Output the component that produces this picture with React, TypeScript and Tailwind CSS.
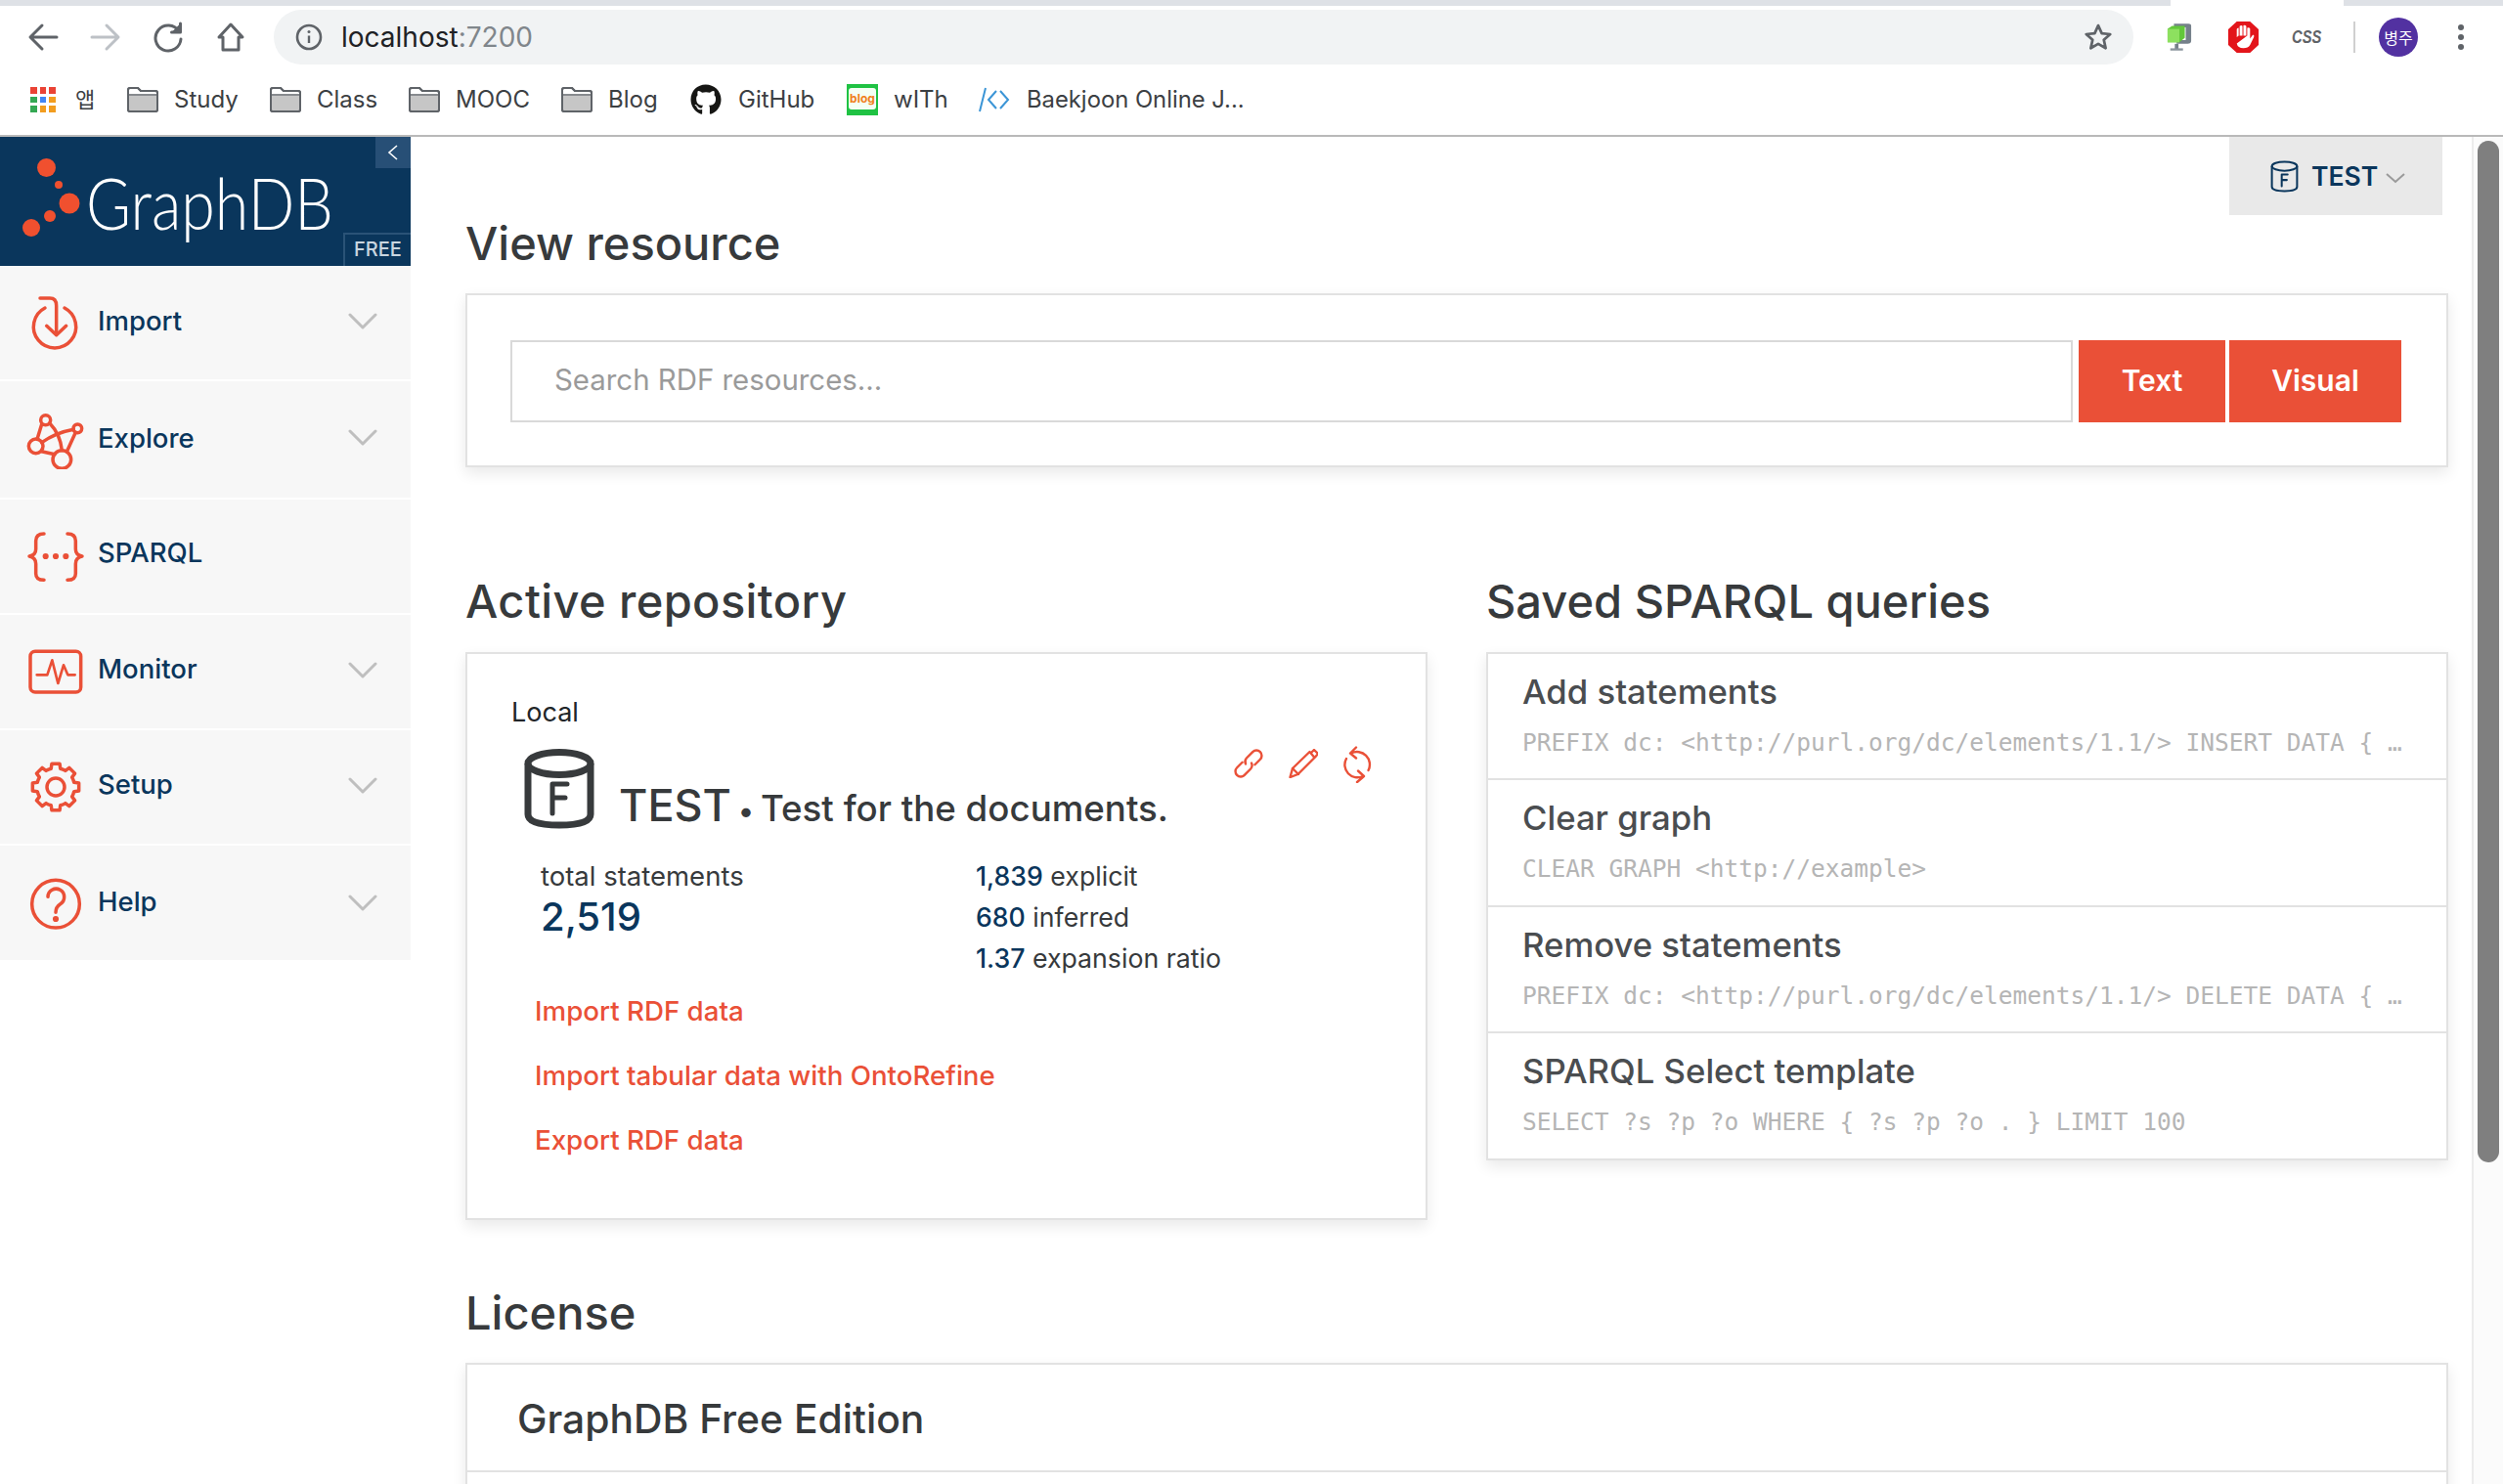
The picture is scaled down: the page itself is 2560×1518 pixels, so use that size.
import React from "react";
import { FaGithub } from "react-icons/fa";

const gearPath = (() => {
  const pts: string[] = [];
  const teeth = 8;
  const R = 72, r = 55;
  for (let i = 0; i < teeth; i++) {
    const a = (i * 2 * Math.PI) / teeth - Math.PI / 2;
    const w = 0.17, s = 0.25;
    const p = (rad: number, ang: number) => `${(90 + rad * Math.cos(ang)).toFixed(1)} ${(90 + rad * Math.sin(ang)).toFixed(1)}`;
    pts.push(`${i === 0 ? "M" : "L"}${p(r + 3, a - s)}`);
    pts.push(`L${p(R, a - w)}`);
    pts.push(`L${p(R, a + w)}`);
    pts.push(`L${p(r + 3, a + s)}`);
    pts.push(`A${r} ${r} 0 0 1 ${p(r + 3, a + (2 * Math.PI) / teeth - s)}`);
  }
  return pts.join(" ") + "Z";
})();

const Chevron = ({ cls }: { cls: string }) => (
  <svg width="30" height="18" viewBox="0 0 30 18" className={`ml-auto mr-[34px] shrink-0 ${cls}`}>
    <path d="M2 2 L15 15 L28 2" fill="none" stroke="#bfbfbf" strokeWidth="3" strokeLinecap="round" strokeLinejoin="round" />
  </svg>
);

const SideIcon = ({ children }: { children: React.ReactNode }) => (
  <svg width="60" height="60" viewBox="0 0 180 180" fill="none" stroke="#ea5037" strokeWidth="10.5" strokeLinecap="round" strokeLinejoin="round" className="shrink-0">
    {children}
  </svg>
);

const sideItems: { label: string; chevron: boolean; h: string; textCls: string; chevCls: string; icon: React.ReactNode }[] = [
  {
    label: "Import", chevron: true, h: "h-[116px]", textCls: "-mt-[2px]", chevCls: "-mt-[3px]",
    icon: (
      <>
        <path d="M57 45 A65 65 0 1 0 117 45" />
        <path d="M42 15 H72 Q92 15 92 38 V125" />
        <path d="M62 100 L92 128 L122 100" />
      </>
    ),
  },
  {
    label: "Explore", chevron: true, h: "h-[119px]", textCls: "-mt-[2px]", chevCls: "-mt-[3px]",
    icon: (
      <>
        <circle cx="59" cy="29" r="15" />
        <circle cx="157" cy="55" r="13" />
        <circle cx="29" cy="109" r="22" />
        <circle cx="109" cy="150" r="28" />
        <path d="M47 42 L33 88" />
        <path d="M46 125 L87 134" />
        <path d="M71 38 Q104 72 109 122" />
        <path d="M47 98 Q90 68 145 58" />
        <path d="M151 67 L124 126" />
      </>
    ),
  },
  {
    label: "SPARQL", chevron: false, h: "h-[116px]", textCls: "-mt-[6px]", chevCls: "",
    icon: (
      <>
        <path d="M54 21 Q29 21 29 43 V68 Q29 86 9 90 Q29 94 29 113 V143 Q29 163 54 163" />
        <path d="M126 21 Q151 21 151 43 V68 Q151 86 171 90 Q151 94 151 113 V143 Q151 163 126 163" />
        <circle cx="59" cy="90" r="4" fill="#ea5037" />
        <circle cx="90" cy="90" r="4" fill="#ea5037" />
        <circle cx="121" cy="90" r="4" fill="#ea5037" />
      </>
    ),
  },
  {
    label: "Monitor", chevron: true, h: "h-[116px]", textCls: "-mt-[5px]", chevCls: "-mt-[3px]",
    icon: (
      <>
        <rect x="12" y="28" width="155" height="125" rx="15" />
        <path d="M32 100 H64 L79 55 L97 126 L114 70 L127 100 H149" strokeWidth="8" />
      </>
    ),
  },
  {
    label: "Setup", chevron: true, h: "h-[116px]", textCls: "-mt-[5px]", chevCls: "-mt-[3px]",
    icon: (
      <>
        <path d={gearPath} />
        <circle cx="90" cy="90" r="27" />
      </>
    ),
  },
  {
    label: "Help", chevron: true, h: "h-[117px]", textCls: "-mt-[1px]", chevCls: "",
    icon: (
      <>
        <circle cx="90" cy="92" r="73" />
        <path d="M66 70 A25 25 0 1 1 104 92 Q90 101 90 118" />
        <circle cx="90" cy="138" r="4" fill="#ea5037" />
      </>
    ),
  },
];

const Folder = () => (
  <svg width="32" height="26" viewBox="0 0 32 26" className="shrink-0">
    <path d="M1 3 Q1 1 3 1 H11 L14 4 H29 Q31 4 31 6 V23 Q31 25 29 25 H3 Q1 25 1 23 Z" fill="#fff" stroke="#5f6368" strokeWidth="2" />
    <path d="M2 9 H30 V24 H2 Z" fill="#c6c6c6" />
    <path d="M1 8 H31" stroke="#5f6368" strokeWidth="1.5" />
    <path d="M1 3 Q1 1 3 1 H11 L14 4 H29 Q31 4 31 6 V23 Q31 25 29 25 H3 Q1 25 1 23 Z" fill="none" stroke="#5f6368" strokeWidth="2" />
  </svg>
);

const AppsGrid = () => {
  const c = ["#ea4335", "#ea4335", "#ea4335", "#34a853", "#4285f4", "#f29d1f", "#34a853", "#f29d1f", "#f29d1f"];
  return (
    <div className="grid grid-cols-3 gap-[3px] w-[26px] h-[26px] shrink-0">
      {c.map((col, i) => (
        <span key={i} className="block w-[6.6px] h-[6.6px]" style={{ backgroundColor: col }} />
      ))}
    </div>
  );
};

const Db = ({ w, h, color, sw, fsw }: { w: number; h: number; color: string; sw: number; fsw: number }) => (
  <svg width={w} height={h} viewBox="0 0 72 82" fill="none" stroke={color} strokeWidth={sw} className="shrink-0">
    <ellipse cx="36" cy="15" rx="32" ry="11.5" />
    <path d="M4 15 V67 Q4 78 36 78 Q68 78 68 67 V15" />
    <path d="M29 66 V36 H44 M29 50 H42" strokeWidth={fsw} strokeLinecap="round" strokeLinejoin="round" />
  </svg>
);

const queries = [
  ["Add statements", "PREFIX dc: <http://purl.org/dc/elements/1.1/> INSERT DATA { …", "h-[129px] border-b-2 border-[#e2e2e2]"],
  ["Clear graph", "CLEAR GRAPH <http://example>", "h-[130px] border-b-2 border-[#e2e2e2]"],
  ["Remove statements", "PREFIX dc: <http://purl.org/dc/elements/1.1/> DELETE DATA { …", "h-[129px] border-b-2 border-[#e2e2e2]"],
  ["SPARQL Select template", "SELECT ?s ?p ?o WHERE { ?s ?p ?o . } LIMIT 100", "h-[128px]"],
];

const cardCls = "border-2 border-[#e2e2e2] bg-white shadow-[0_6px_14px_rgba(0,0,0,0.09)]";
const h2Cls = "text-[47px] leading-[56px] font-medium text-[#373a3c]";

export default function App() {
  return (
    <div className="w-[2560px] h-[1518px] overflow-hidden bg-white flex flex-col font-[Inter,'Noto_Sans_CJK_KR',sans-serif]">
      {/* Tab strip edge */}
      <div className="h-[6px] flex shrink-0">
        <div className="w-[2220px] bg-[#dee1e6]" />
        <div className="w-[177px] bg-white" />
        <div className="flex-1 bg-[#dee1e6]" />
      </div>

      {/* Toolbar */}
      <div className="h-[64px] shrink-0 flex items-center relative">
        <div className="w-[280px] flex items-center pl-[28px] gap-[32px] shrink-0">
          <svg width="32" height="32" viewBox="0 0 32 32" fill="none" stroke="#5f6368" strokeWidth="3" strokeLinecap="round" strokeLinejoin="round"><path d="M30 16 H4 M15 4 L3 16 L15 28" /></svg>
          <svg width="32" height="32" viewBox="0 0 32 32" fill="none" stroke="#bdc1c6" strokeWidth="3" strokeLinecap="round" strokeLinejoin="round"><path d="M2 16 H28 M17 4 L29 16 L17 28" /></svg>
          <svg width="32" height="32" viewBox="0 0 32 32" fill="none" stroke="#5f6368" strokeWidth="3" strokeLinecap="round" strokeLinejoin="round"><path d="M27 10 A13 13 0 1 0 29 18" /><path d="M28.5 2 V11 H19.5" fill="#5f6368" /></svg>
          <svg width="32" height="32" viewBox="0 0 32 32" fill="none" stroke="#5f6368" strokeWidth="3" strokeLinejoin="round"><path d="M16 3 L28 16 H24 V29 H8 V16 H4 Z" /></svg>
        </div>
        <div className="w-[1902px] h-[56px] rounded-full bg-[#f1f3f4] flex items-center pl-[22px] shrink-0">
          <svg width="28" height="28" viewBox="0 0 28 28" fill="none" stroke="#5f6368" className="shrink-0">
            <circle cx="14" cy="14" r="12" strokeWidth="2.6" />
            <path d="M14 12.5 V20" strokeWidth="2.4" />
            <circle cx="14" cy="8.5" r="1.5" fill="#5f6368" stroke="none" />
          </svg>
          <span className="ml-[19px] text-[28px] leading-none text-[#202124]">localhost<span className="text-[#80868b]">:7200</span></span>
          <svg width="30" height="30" viewBox="0 0 24 24" fill="none" stroke="#5f6368" strokeWidth="2.2" strokeLinejoin="round" className="ml-auto mr-[21px]">
            <path d="M12 2.5 L14.9 8.9 L21.8 9.6 L16.6 14.2 L18.1 21 L12 17.5 L5.9 21 L7.4 14.2 L2.2 9.6 L9.1 8.9 Z" />
          </svg>
        </div>
        <div className="flex items-center flex-1 h-[56px]">
          {/* clamp extension */}
          <svg width="26" height="32" viewBox="0 0 28 42" preserveAspectRatio="none" className="ml-[34px] shrink-0">
            <path d="M8 3 H24 Q27 3 27 6 V26 Q27 30 23 30 H11 V25 H21 V8 H8 Z" fill="#75808a" />
            <path d="M1 10 L6 6 H20 V22 L14 28 H1 Z" fill="#63c73a" />
            <path d="M1 10 H14 V28 H1 Z" fill="#8de05f" />
            <rect x="9" y="30" width="4" height="8" fill="#75808a" />
            <rect x="4" y="36" width="14" height="3" fill="#8a949d" />
          </svg>
          {/* adblock */}
          <svg width="33" height="32" viewBox="0 0 34 40" preserveAspectRatio="none" className="ml-[36px] shrink-0">
            <path d="M10 0 H24 L33 10 V30 L24 40 H10 L1 30 V10 Z" fill="#e3151b" />
            <path d="M10 20 V10 Q10 8 12 8 V18 M13 18 V6 Q15 4 16 6 V18 M17 18 V5 Q19 4 20 6 V18 M21 18 V8 Q23 7 24 9 V22 L27 17 Q29 18 28 20 L24 30 Q22 34 17 34 Q11 34 10 28 Z" fill="#fff" />
          </svg>
          <span className="ml-[33px] w-[30px] shrink-0 text-[18px] leading-none font-bold italic text-[#5f6368] origin-left scale-x-[0.82] font-['Liberation_Sans',sans-serif]">CSS</span>
          <span className="ml-[33px] w-[2px] h-[32px] bg-[#d0d0d0] shrink-0" />
          <span className="ml-[24px] w-[40px] h-[40px] rounded-full bg-[#5231a1] text-white text-[16px] flex items-center justify-center shrink-0 font-['Noto_Sans_CJK_KR',sans-serif]">병주</span>
          <span className="ml-[41px] flex flex-col gap-[4px] shrink-0">
            <span className="block w-[6px] h-[6px] rounded-full bg-[#5f6368]" />
            <span className="block w-[6px] h-[6px] rounded-full bg-[#5f6368]" />
            <span className="block w-[6px] h-[6px] rounded-full bg-[#5f6368]" />
          </span>
        </div>
      </div>

      {/* Bookmarks */}
      <div className="h-[70px] shrink-0 border-b-2 border-[#b9b9b9] flex items-center pl-[31px] pb-[4px] text-[24px] leading-none text-[#3c4043]">
        <AppsGrid />
        <span className="ml-[20px] w-[24px] text-[22px]">앱</span>
        <span className="ml-[29px] flex items-center gap-[16px]"><Folder /><span className="w-[66px]">Study</span></span>
        <span className="ml-[32px] flex items-center gap-[16px]"><Folder /><span className="w-[62px]">Class</span></span>
        <span className="ml-[32px] flex items-center gap-[16px]"><Folder /><span className="w-[76px]">MOOC</span></span>
        <span className="ml-[32px] flex items-center gap-[16px]"><Folder /><span className="w-[50px]">Blog</span></span>
        <span className="ml-[34px] flex items-center gap-[17px]">
          <FaGithub className="w-[32px] h-[32px] text-[#161614]" />
          <span className="w-[78px]">GitHub</span>
        </span>
        <span className="ml-[33px] flex items-center gap-[16px]">
          <span className="w-[32px] h-[32px] bg-[#1fc243] flex items-center justify-center shrink-0">
            <span className="w-[28px] h-[22px] -mt-[3px] rounded-[3px] bg-[#f4fff4] flex items-center justify-center text-[12px] font-bold leading-none text-[#f08020]">blog</span>
          </span>
          <span className="w-[56px]">wITh</span>
        </span>
        <span className="ml-[31px] flex items-center gap-[17px]">
          <svg width="32" height="28" viewBox="0 0 32 28" fill="none" stroke="#3b95d6" strokeWidth="2" className="shrink-0">
            <path d="M1 26 L7 2 M18 5 L10 14 L18 23 M22 5 L30 14 L22 23" />
          </svg>
          <span className="text-[23.8px]">Baekjoon Online J...</span>
        </span>
      </div>

      <div className="flex-1 flex min-h-0">
        {/* Sidebar */}
        <aside className="w-[420px] shrink-0 flex flex-col">
          <div className="h-[132px] bg-[#0a365c] relative overflow-hidden shrink-0">
            <svg width="90" height="132" viewBox="0 0 90 132" className="absolute left-0 top-0">
              <g fill="#f0502f">
                <circle cx="47.5" cy="31.5" r="9.5" />
                <circle cx="60" cy="49" r="4" />
                <circle cx="71" cy="68" r="10.5" />
                <circle cx="51" cy="81" r="6" />
                <circle cx="32" cy="93" r="9" />
              </g>
            </svg>
            <span className="absolute left-[88px] top-[23px] text-[72px] leading-[88px] font-light text-white origin-left scale-x-[0.87] font-[Lato,sans-serif]">GraphDB</span>
            <span className="absolute right-0 top-0 w-[36px] h-[32px] bg-[#274f76] flex items-center justify-center">
              <svg width="12" height="18" viewBox="0 0 12 18" fill="none" stroke="#fff" strokeWidth="1.6"><path d="M10 2 L2 9 L10 16" /></svg>
            </span>
            <span className="absolute right-0 bottom-0 w-[69px] h-[34px] border-t-2 border-l-2 border-[#2a5377] pb-[2px] flex items-center justify-center text-[20px] leading-none font-medium text-[#c9d6e0]">FREE</span>
          </div>
          <div className="flex flex-col gap-[2px]">
            {sideItems.map((it) => (
              <div key={it.label} className={`${it.h} bg-[#f7f7f7] flex items-center pl-[27px]`}>
                <SideIcon>{it.icon}</SideIcon>
                <span className={`ml-[13px] text-[27.5px] leading-none font-medium text-[#0a365c] ${it.textCls}`}>{it.label}</span>
                {it.chevron && <Chevron cls={it.chevCls} />}
              </div>
            ))}
          </div>
        </aside>

        {/* Main */}
        <main className="flex-1 relative overflow-hidden pl-[56px] pr-[24px] pt-[81px]">
          <div className="absolute right-[30px] top-0 w-[218px] h-[80px] bg-[#e9e9e9] flex items-center pl-[42px]">
            <Db w={29} h={33} color="#0a365c" sw={5} fsw={5} />
            <span className="ml-[13px] text-[26.5px] leading-none font-semibold text-[#0a365c]">TEST</span>
            <svg width="22" height="12" viewBox="0 0 22 12" fill="none" stroke="#9a9a9a" strokeWidth="2" className="ml-[7px] mt-[4px]"><path d="M2 2 L11 10 L20 2" /></svg>
          </div>

          <h2 className={h2Cls}>View resource</h2>
          <div className={`${cardCls} mt-[23px] h-[178px] pl-[44px] pt-[46px] flex`}>
            <div className="w-[1598px] h-[84px] border-2 border-[#d9d9d9] flex items-center pl-[43px] pb-[2px] text-[29.4px] leading-none text-[#9a9a9a]">Search RDF resources...</div>
            <button className="ml-[6px] w-[150px] h-[84px] bg-[#ea5037] text-white text-[30px] font-semibold leading-none pb-[3px]">Text</button>
            <button className="ml-[4px] w-[176px] h-[84px] bg-[#ea5037] text-white text-[30px] font-semibold leading-none pb-[3px]">Visual</button>
          </div>

          <div className="flex gap-[60px] mt-[109px]">
            <section className="w-[984px] shrink-0">
              <h2 className={`${h2Cls} tracking-[0.4px]`}>Active repository</h2>
              <div className={`${cardCls} mt-[24px] h-[581px] pl-[45px] pt-[41px] pr-[54px]`}>
                <div className="text-[27px] leading-[38px] text-[#212529]">Local</div>
                <div className="mt-[18px] ml-[13px] h-[82px] flex items-end">
                  <Db w={72} h={82} color="#373a3c" sw={7} fsw={5} />
                  <div className="ml-[25px] -mb-[9px] leading-[46px] text-[#373a3c] font-medium whitespace-nowrap">
                    <span className="text-[45px]">TEST</span>
                    <span className="inline-block w-[30px] text-center text-[30px]">•</span>
                    <span className="text-[36.7px]">Test for the documents.</span>
                  </div>
                  <div className="ml-auto self-start flex gap-[26px]">
                    <svg width="30" height="30" viewBox="2.5 2.5 25 25" fill="none" stroke="#ea5037" strokeWidth="2" strokeLinecap="round" strokeLinejoin="round">
                      <g transform="rotate(-45 15 15)">
                        <path d="M12 10.5 H5.5 a4.5 4.5 0 0 0 0 9 H13 a4.5 4.5 0 0 0 4 -3" />
                        <path d="M18 19.5 H24.5 a4.5 4.5 0 0 0 0 -9 H17 a4.5 4.5 0 0 0 -4 3" />
                      </g>
                    </svg>
                    <svg width="30" height="30" viewBox="0 0 30 30" fill="none" stroke="#ea5037" strokeWidth="2.4" strokeLinecap="round" strokeLinejoin="round">
                      <path d="M1 30 L3.5 21 L21 4 L26 10 L9 27 Z" transform="translate(0.5 -1)" />
                      <path d="M4 20 L10 26" />
                      <path d="M23 4 L26 1 L30 5 L27.5 8" />
                    </svg>
                    <svg width="30" height="38" viewBox="0 0 30 38" fill="none" stroke="#ea5037" strokeWidth="2.4" strokeLinecap="round" strokeLinejoin="round" className="-mt-[3px]">
                      <path d="M25.5 25 A13 13 0 0 0 8 7.5 M13 1.5 L7 7.5 L13 12.5" />
                      <path d="M3 13 A13 13 0 0 0 20 31 M15 25.5 L21 31 L14 37" />
                    </svg>
                  </div>
                </div>

                <div className="mt-[27px] ml-[30px] flex text-[26.7px] leading-[42px] text-[#373a3c]">
                  <div className="w-[445px] shrink-0">
                    <div className="text-[27.5px]">total statements</div>
                    <div className="text-[40px] font-medium text-[#0a365c]">2,519</div>
                  </div>
                  <div>
                    <div><span className="font-medium text-[#0a365c]">1,839</span> explicit</div>
                    <div><span className="font-medium text-[#0a365c]">680</span> inferred</div>
                    <div><span className="font-medium text-[#0a365c]">1.37</span> expansion ratio</div>
                  </div>
                </div>

                <div className="mt-[14px] ml-[24px] flex flex-col gap-[28px] text-[27.7px] leading-[38px] font-medium text-[#ea5037]">
                  <span>Import RDF data</span>
                  <span>Import tabular data with OntoRefine</span>
                  <span>Export RDF data</span>
                </div>
              </div>
            </section>

            <section className="w-[984px] shrink-0">
              <h2 className={h2Cls}>Saved SPARQL queries</h2>
              <div className={`${cardCls} mt-[24px]`}>
                {queries.map(([t, q, cls]) => (
                  <div key={t} className={`pl-[35px] pt-[16px] ${cls}`}>
                    <div className="text-[34.7px] leading-[44px] font-medium text-[#4a4d50]">{t}</div>
                    <div className="mt-[13px] whitespace-nowrap text-[24.5px] leading-[36px] text-[#b5b5b5] font-['DejaVu_Sans_Mono',monospace]">{q}</div>
                  </div>
                ))}
              </div>
            </section>
          </div>

          <div className="mt-[67px]">
            <h2 className={h2Cls}>License</h2>
            <div className={`${cardCls} mt-[23px]`}>
              <div className="h-[110px] border-b-2 border-[#e2e2e2] pl-[51px] pt-[2px] flex items-center text-[40.8px] leading-none font-medium text-[#373a3c]">GraphDB Free Edition</div>
              <div className="h-[40px]" />
            </div>
          </div>
        </main>

        {/* Scrollbar */}
        <div className="w-[32px] shrink-0 border-l-2 border-[#ececec] bg-[#fbfbfb] pl-[4px] pt-[4px]">
          <div className="w-[22px] h-[1045px] rounded-full bg-[#7f7f7f]" />
        </div>
      </div>
    </div>
  );
}
